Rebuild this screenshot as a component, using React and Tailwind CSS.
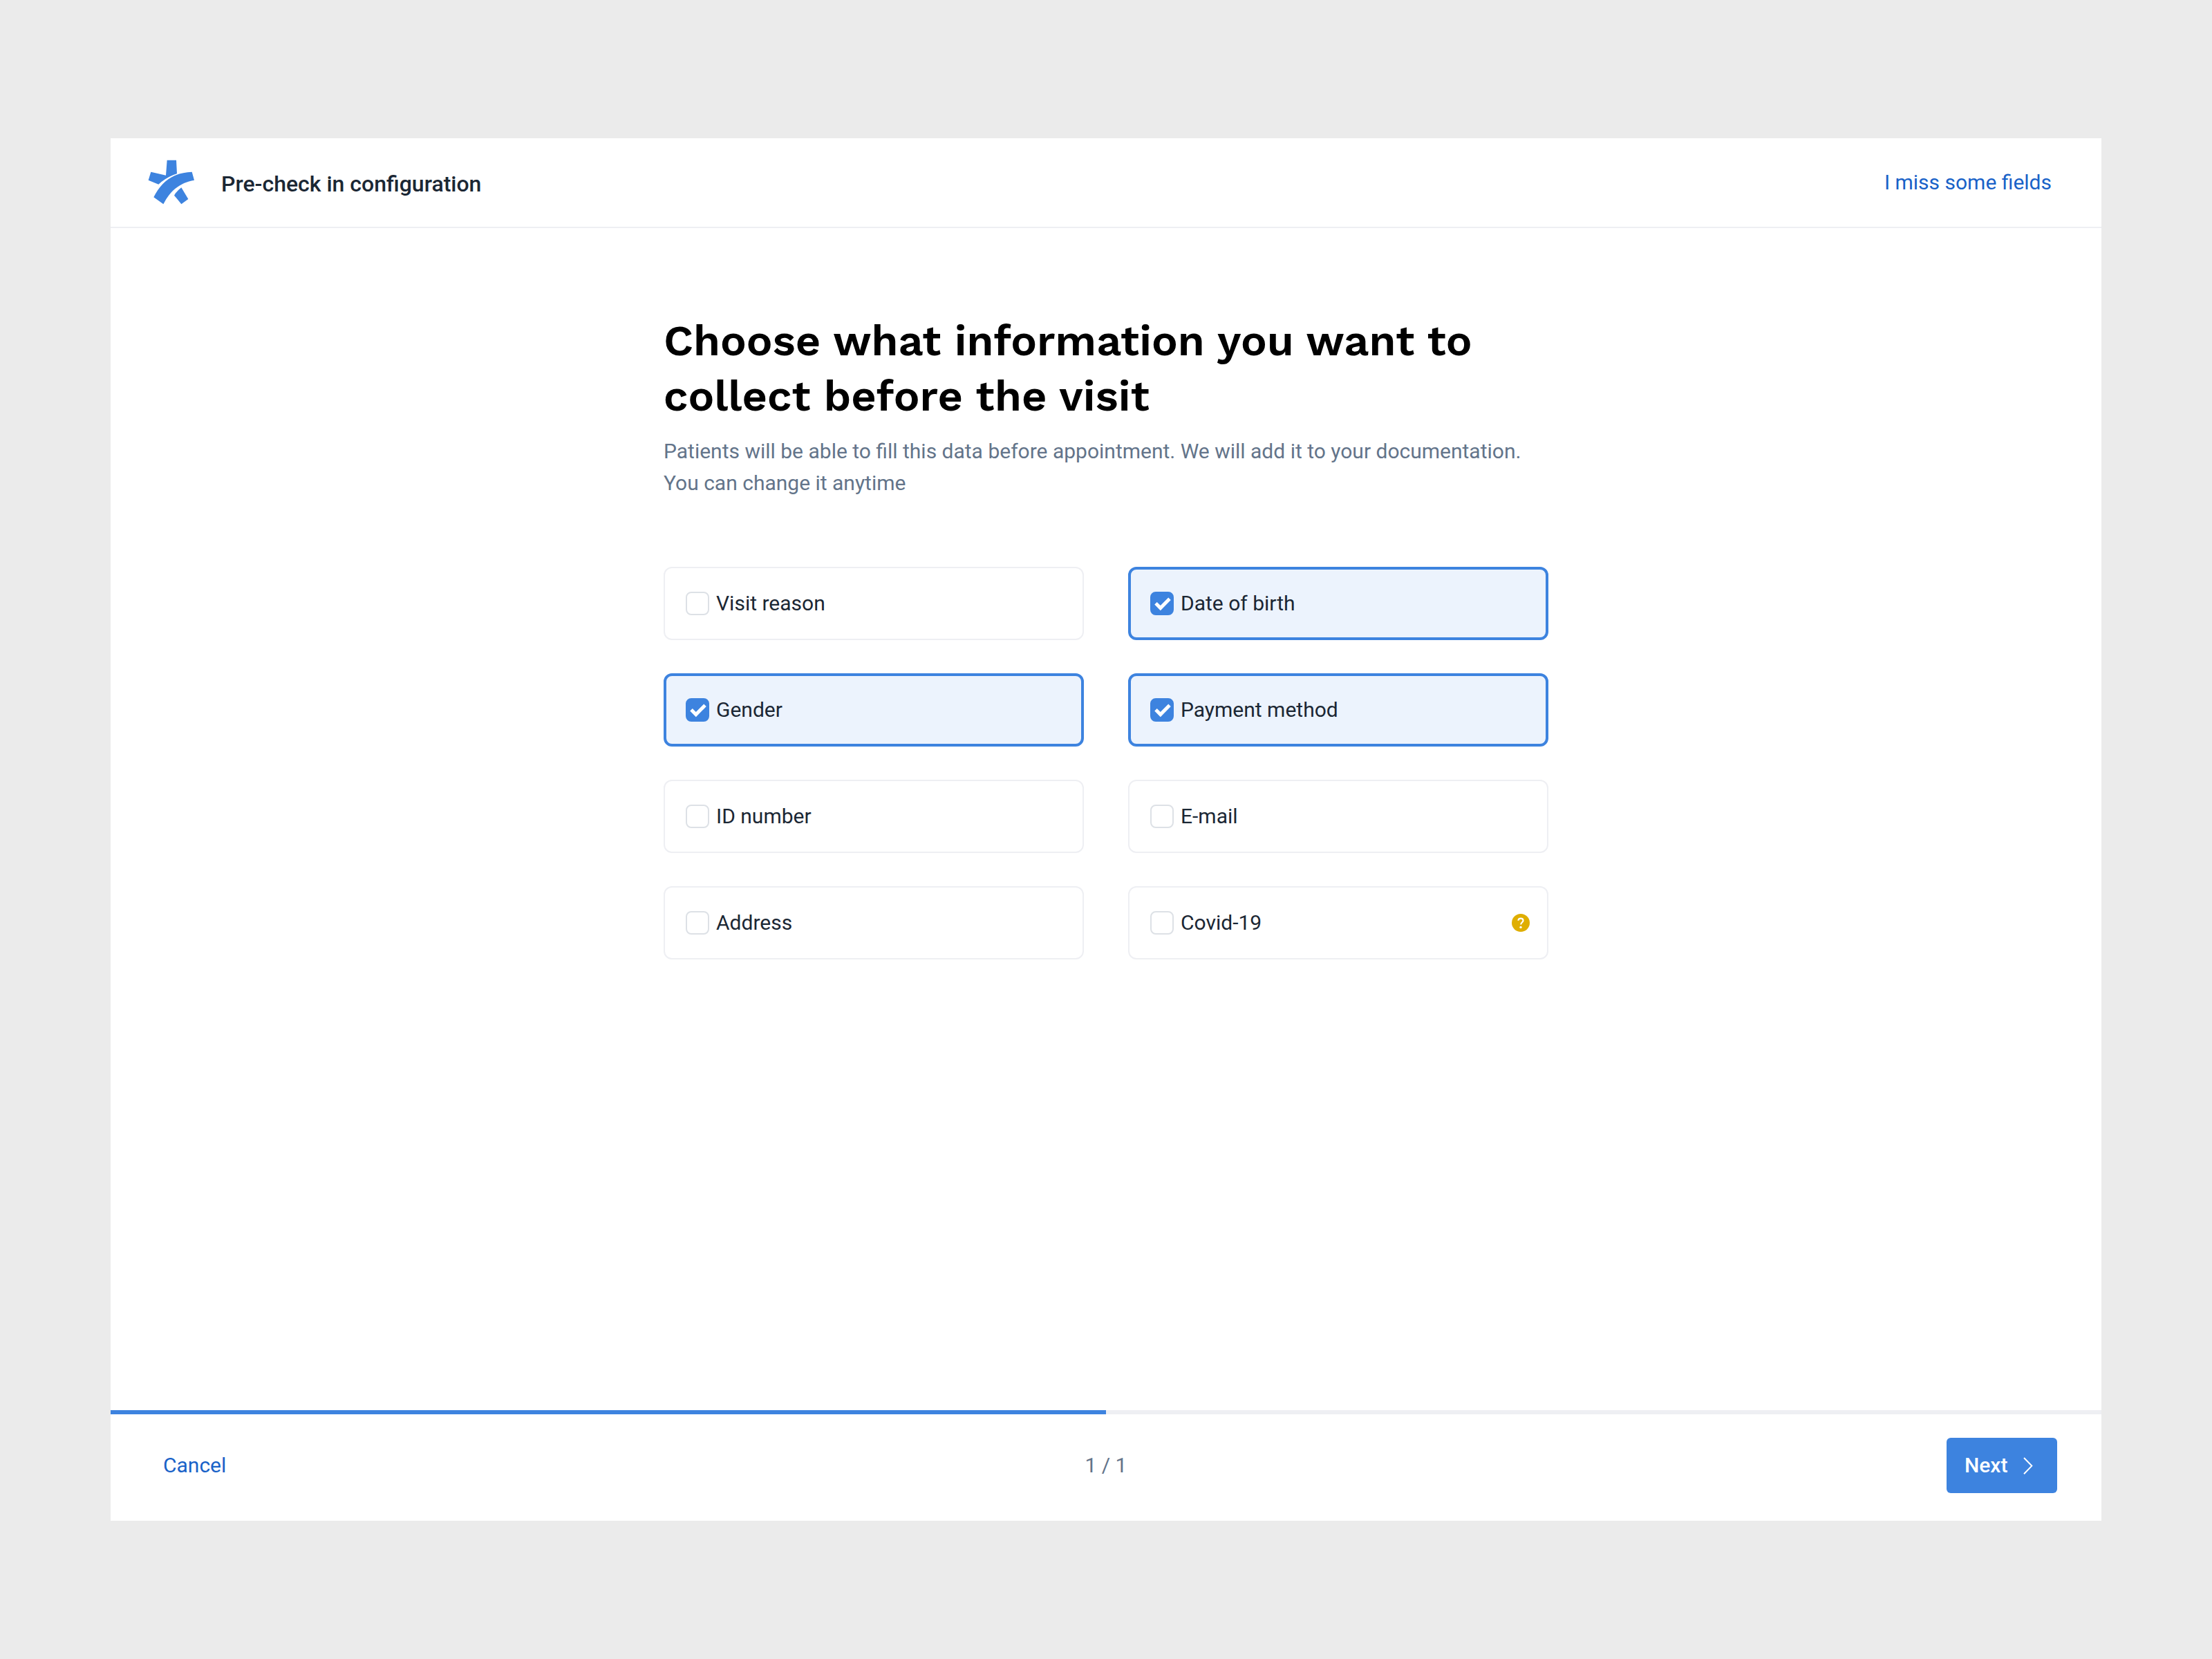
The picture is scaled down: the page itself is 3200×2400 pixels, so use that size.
const FIELDS = [
  { id: "visit-reason", label: "Visit reason", checked: false },
  { id: "date-of-birth", label: "Date of birth", checked: true },
  { id: "gender", label: "Gender", checked: true },
  { id: "payment-method", label: "Payment method", checked: true },
  { id: "id-number", label: "ID number", checked: false },
  { id: "e-mail", label: "E-mail", checked: false },
  { id: "address", label: "Address", checked: false },
  { id: "covid-19", label: "Covid-19", checked: false, help: true },
];

function Logo() {
  return (
    <svg viewBox="42 26 204 204" className="size-[68px]" fill="#3d83df" aria-hidden="true">
      <path d="M125 31H165L168 90Q124 103 88 136L44 118L55 82L120 97Z" />
      <path d="M233 82L243 118C180 129 138 164 109 222L67 192C101 122 156 84 233 82Z" />
      <path d="M187 150L217 200L187 222L156 184Q166 166 187 150Z" />
    </svg>
  );
}

function HelpIcon() {
  return (
    <svg viewBox="0 0 26 26" className="size-[26px]" aria-hidden="true">
      <circle cx="13" cy="13" r="13" fill="#dfae00" />
      <path
        d="M9.4 9.8C9.5 7.7 11 6.6 13 6.6C15 6.6 16.5 7.9 16.5 9.7C16.5 12.2 13.2 12.4 13.2 15.4"
        fill="none"
        stroke="#fff"
        strokeWidth="2.2"
      />
      <circle cx="13" cy="19.4" r="1.7" fill="#fff" />
    </svg>
  );
}

function FieldOption({ field }) {
  return (
    <div className="flex h-[106px] items-center gap-2.5 rounded-xl border-2 border-[#eeeff3] px-[30px] has-checked:border-4 has-checked:border-[#3d83df] has-checked:bg-[#ecf3fd] has-checked:px-7">
      <span className="grid size-[34px] shrink-0 place-items-center">
        <input
          id={field.id}
          type="checkbox"
          defaultChecked={field.checked}
          className="peer col-start-1 row-start-1 size-[34px] appearance-none rounded-lg border-2 border-[#dde1e6] bg-white checked:border-[#3d83df] checked:bg-[#3d83df]"
        />
        <svg
          viewBox="0 0 34 34"
          className="pointer-events-none invisible col-start-1 row-start-1 size-[34px] peer-checked:visible"
          fill="none"
          stroke="#fff"
          strokeWidth="5"
          aria-hidden="true"
        >
          <path d="M8 16.8L14.8 23.6L28 10.3" />
        </svg>
      </span>
      <label htmlFor={field.id} className="flex-1 text-[30px] leading-[46px] text-[#1b2734]">
        {field.label}
      </label>
      {field.help && (
        <button type="button" aria-label="Help" className="-mr-[5px]">
          <HelpIcon />
        </button>
      )}
    </div>
  );
}

export default function App() {
  return (
    <div className="flex min-h-screen flex-col bg-[#ebebeb] px-40 py-[200px] font-['Roboto',sans-serif]">
      <div className="flex flex-1 flex-col bg-white">
        <header className="flex items-center justify-between border-b-2 border-[#eeeff3] py-[30px] pr-[72px] pl-[54px]">
          <div className="flex items-center gap-[38px]">
            <Logo />
            <p className="pt-1 text-[32px] leading-10 font-medium text-[#1b2734]">Pre-check in configuration</p>
          </div>
          <a href="#missing" className="text-[30px] leading-10 text-[#1962c8]">
            I miss some fields
          </a>
        </header>

        <main className="mx-auto w-full max-w-[1280px] flex-1 pt-[122px]">
          <h1 className="font-['Work_Sans','Inter',sans-serif] text-[63px] leading-[80px] font-semibold text-black">
            Choose what information you want to collect before the visit
          </h1>
          <p className="mt-[18px] text-[30px] leading-[46px] text-[#63748a]">
            Patients will be able to fill this data before appointment. We will add it to your documentation. You can
            change it anytime
          </p>
          <form className="mt-[98px] grid grid-cols-2 gap-x-16 gap-y-12">
            {FIELDS.map((field) => (
              <FieldOption key={field.id} field={field} />
            ))}
          </form>
        </main>

        <footer>
          <div className="h-1.5 bg-[#eeeff3]">
            <div className="h-full w-1/2 bg-[#3d83df]" />
          </div>
          <div className="grid grid-cols-3 items-center px-16 pt-[34px] pb-10 text-[30px] leading-10">
            <button type="button" className="justify-self-start px-3 text-[#1962c8]">
              Cancel
            </button>
            <p className="text-center text-[#63748a]">1 / 1</p>
            <button
              type="button"
              className="flex h-20 w-40 items-center gap-4 justify-self-end rounded-md bg-[#3d83df] pl-[26px] font-medium text-white"
            >
              Next
              <svg viewBox="0 0 28 28" className="size-7" fill="none" stroke="#fff" strokeWidth="2" aria-hidden="true">
                <path d="M8 3L19.3 14.6L8 26.2" />
              </svg>
            </button>
          </div>
        </footer>
      </div>
    </div>
  );
}
